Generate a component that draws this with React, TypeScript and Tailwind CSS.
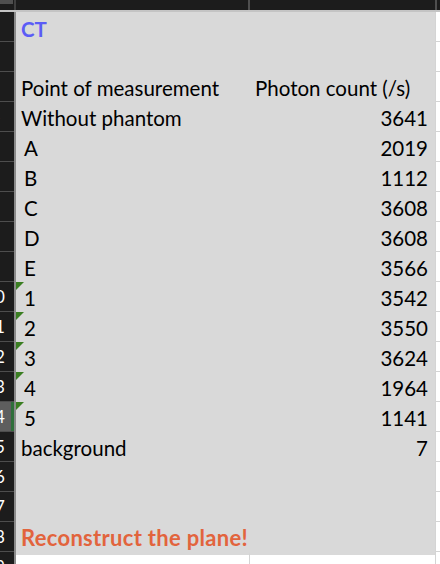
type Row = {
  n: number
  a?: string
  b?: string
  kind?: 'ct' | 'red' | 'head'
  indent?: boolean
  flag?: boolean
  selected?: boolean
}

const rows: Row[] = [
  { n: 1, a: 'CT', kind: 'ct' },
  { n: 2 },
  { n: 3, a: 'Point of measurement', b: 'Photon count (/s)', kind: 'head' },
  { n: 4, a: 'Without phantom', b: '3641' },
  { n: 5, a: 'A', b: '2019', indent: true },
  { n: 6, a: 'B', b: '1112', indent: true },
  { n: 7, a: 'C', b: '3608', indent: true },
  { n: 8, a: 'D', b: '3608', indent: true },
  { n: 9, a: 'E', b: '3566', indent: true },
  { n: 10, a: '1', b: '3542', indent: true, flag: true },
  { n: 11, a: '2', b: '3550', indent: true, flag: true },
  { n: 12, a: '3', b: '3624', indent: true, flag: true },
  { n: 13, a: '4', b: '1964', indent: true, flag: true },
  { n: 14, a: '5', b: '1141', indent: true, flag: true, selected: true },
  { n: 15, a: 'background', b: '7' },
  { n: 16 },
  { n: 17 },
  { n: 18, a: 'Reconstruct the plane!', kind: 'red' },
]

function RowHeader({ n, selected }: { n: number; selected?: boolean }) {
  return (
    <div
      className={
        'relative h-full w-[14px] shrink-0 overflow-hidden border-b border-[#4d4d4d] ' +
        (selected ? 'bg-[#5e5e5e]' : 'bg-[#1c1c1c]')
      }
    >
      <div className="absolute left-[-25px] top-0 flex h-full w-[40px] items-center justify-center text-[17px] leading-none text-white">
        {n}
      </div>
      {selected && <div className="absolute right-0 top-0 h-full w-[3px] bg-[#2f6f3b]" />}
    </div>
  )
}

export default function App() {
  return (
    <div
      className="h-[564px] w-[440px] overflow-hidden bg-white"
      style={{ fontFamily: 'Lato, "Open Sans", sans-serif' }}
    >
      {/* column headers */}
      <div className="flex h-[10px] bg-[#1c1c1c]">
        <div className="w-[14px] shrink-0">
          <div className="h-[4px] w-[13px] bg-[#4f4f4f]" />
        </div>
        <div className="w-[2px] bg-[#3f3f3f]" />
        <div className="w-[232px] shrink-0" />
        <div className="w-[2px] bg-[#4f4f4f]" />
        <div className="w-[185px] shrink-0" />
        <div className="w-[2px] bg-[#4f4f4f]" />
      </div>
      <div className="h-[2px] bg-[#c4c4c4]" />

      {rows.map((r) => (
        <div key={r.n} className="flex h-[30px]">
          <RowHeader n={r.n} selected={r.selected} />
          <div className="w-[2px] shrink-0 bg-[#8a8a8a]" />
          <div className="relative flex w-[233px] shrink-0 items-end bg-[#d9d9d9] pb-[2px]">
            {r.flag && (
              <div className="absolute left-0 top-0 h-0 w-0 border-l-[8px] border-t-[8px] border-l-transparent border-t-[#3a7e22] [transform:scaleX(-1)]" />
            )}
            {r.a && (
              <span
                className={
                  'whitespace-nowrap leading-[24px] ' +
                  (r.indent ? 'pl-[8px] ' : 'pl-[5px] ') +
                  (r.kind === 'ct'
                    ? 'self-start pt-[5px] text-[20.5px] font-bold text-[#5b5cf6]'
                    : r.kind === 'red'
                      ? 'text-[22px] font-bold tracking-[0.3px] text-[#e2643d]'
                      : 'text-[20.5px] text-black')
                }
              >
                {r.a}
              </span>
            )}
          </div>
          <div
            className={
              'flex w-[186px] shrink-0 items-end bg-[#d9d9d9] pb-[2px] ' +
              (r.kind === 'head' ? 'justify-start pl-[6px]' : 'justify-end pr-[7px]')
            }
          >
            {r.b && <span className="whitespace-nowrap text-[20.5px] leading-[24px] text-black">{r.b}</span>}
          </div>
          <div className="flex-1 border-b border-l border-[#d4d4d4] bg-white" />
        </div>
      ))}

      <div className="flex h-[30px]">
        <RowHeader n={19} />
        <div className="w-[2px] shrink-0 bg-[#8a8a8a]" />
        <div className="w-[233px] shrink-0 border-t-[3px] border-[#d9d9d9] bg-white" />
        <div className="w-[186px] shrink-0 border-l border-t-[3px] border-l-[#d4d4d4] border-t-[#d9d9d9] bg-white" />
        <div className="flex-1 border-l border-[#d4d4d4] bg-white" />
      </div>
    </div>
  )
}
